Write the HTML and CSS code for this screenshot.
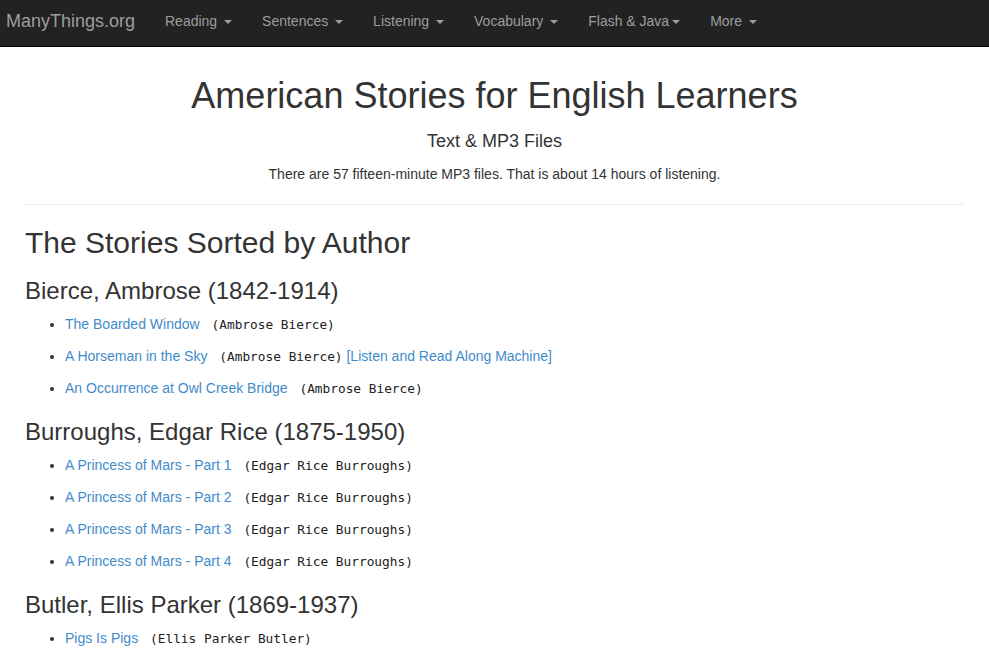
FILE: index.html
```html
<!DOCTYPE html>
<html lang="en">
<head>
<meta charset="utf-8">
<title>American Stories for English Learners</title>
<link rel="stylesheet" href="styles.css">
</head>
<body>
<nav class="navbar">
  <a class="brand" href="#">ManyThings.org</a>
  <ul class="nav">
    <li><a href="#">Reading <span class="caret"></span></a></li>
    <li><a href="#">Sentences <span class="caret"></span></a></li>
    <li><a href="#">Listening <span class="caret"></span></a></li>
    <li><a href="#">Vocabulary <span class="caret"></span></a></li>
    <li><a href="#">Flash &amp; Java<span class="caret"></span></a></li>
    <li><a href="#">More <span class="caret"></span></a></li>
  </ul>
</nav>
<main class="container">
  <header class="intro">
    <h1>American Stories for English Learners</h1>
    <h4>Text &amp; MP3 Files</h4>
    <p>There are 57 fifteen-minute MP3 files. That is about 14 hours of listening.</p>
  </header>
  <hr>
  <h2>The Stories Sorted by Author</h2>

  <h3>Bierce, Ambrose (1842-1914)</h3>
  <ul class="stories">
    <li><a href="#">The Boarded Window</a> <code>(Ambrose Bierce)</code></li>
    <li><a href="#">A Horseman in the Sky</a> <code>(Ambrose Bierce)</code> <a href="#">[Listen and Read Along Machine]</a></li>
    <li><a href="#">An Occurrence at Owl Creek Bridge</a> <code>(Ambrose Bierce)</code></li>
  </ul>

  <h3>Burroughs, Edgar Rice (1875-1950)</h3>
  <ul class="stories">
    <li><a href="#">A Princess of Mars - Part 1</a> <code>(Edgar Rice Burroughs)</code></li>
    <li><a href="#">A Princess of Mars - Part 2</a> <code>(Edgar Rice Burroughs)</code></li>
    <li><a href="#">A Princess of Mars - Part 3</a> <code>(Edgar Rice Burroughs)</code></li>
    <li><a href="#">A Princess of Mars - Part 4</a> <code>(Edgar Rice Burroughs)</code></li>
  </ul>

  <h3>Butler, Ellis Parker (1869-1937)</h3>
  <ul class="stories">
    <li><a href="#">Pigs Is Pigs</a> <code>(Ellis Parker Butler)</code></li>
  </ul>
</main>
</body>
</html>
```
FILE: styles.css
```css
* { box-sizing: border-box; }
html, body { margin: 0; padding: 0; }
body {
  font-family: "Liberation Sans", Arial, sans-serif;
  font-size: 14px;
  line-height: 20px;
  color: #333;
  background: #fff;
}
a { color: #428bca; text-decoration: none; }

.navbar {
  display: flex;
  align-items: flex-start;
  height: 47px;
  background: #222;
  border-bottom: 1px solid #080808;
}
.brand {
  flex: 0 0 150px;
  padding: 11px 0 0 6px;
  font-size: 18px;
  line-height: 20px;
  color: #9d9d9d;
}
.nav {
  display: flex;
  list-style: none;
  margin: 0;
  padding: 0;
}
.nav a {
  display: block;
  padding: 11px 15px 0;
  line-height: 20px;
  color: #9d9d9d;
}
.caret {
  display: inline-block;
  width: 0;
  height: 0;
  margin-left: 3px;
  vertical-align: middle;
  border-top: 4px solid #9d9d9d;
  border-left: 4px solid transparent;
  border-right: 4px solid transparent;
}

.container { padding: 0 25px; }
.intro { text-align: center; padding-top: 29px; }
h1 {
  margin: 0;
  font-size: 36px;
  line-height: 40px;
  font-weight: 500;
}
h4 {
  margin: 15px 0 0;
  font-size: 18px;
  line-height: 20px;
  font-weight: 500;
}
.intro p { margin: 13px 0 0; }
hr {
  margin: 20px 0 0;
  border: 0;
  border-top: 1px solid #eee;
}
h2 {
  margin: 21px 0 0;
  font-size: 30px;
  line-height: 33px;
  font-weight: 500;
}
h3 {
  margin: 19px 0 0;
  font-size: 24px;
  line-height: 26px;
  font-weight: 500;
}
.stories {
  margin: 10px 0 0;
  padding-left: 40px;
}
.stories li { line-height: 20px; }
.stories li + li { margin-top: 12px; }
.stories + h3 { margin-top: 21px; }
code {
  font-family: "DejaVu Sans Mono", "Liberation Mono", monospace;
  font-size: 12.8px;
  line-height: 1;
  color: #222;
  margin-left: 8px;
}
```
